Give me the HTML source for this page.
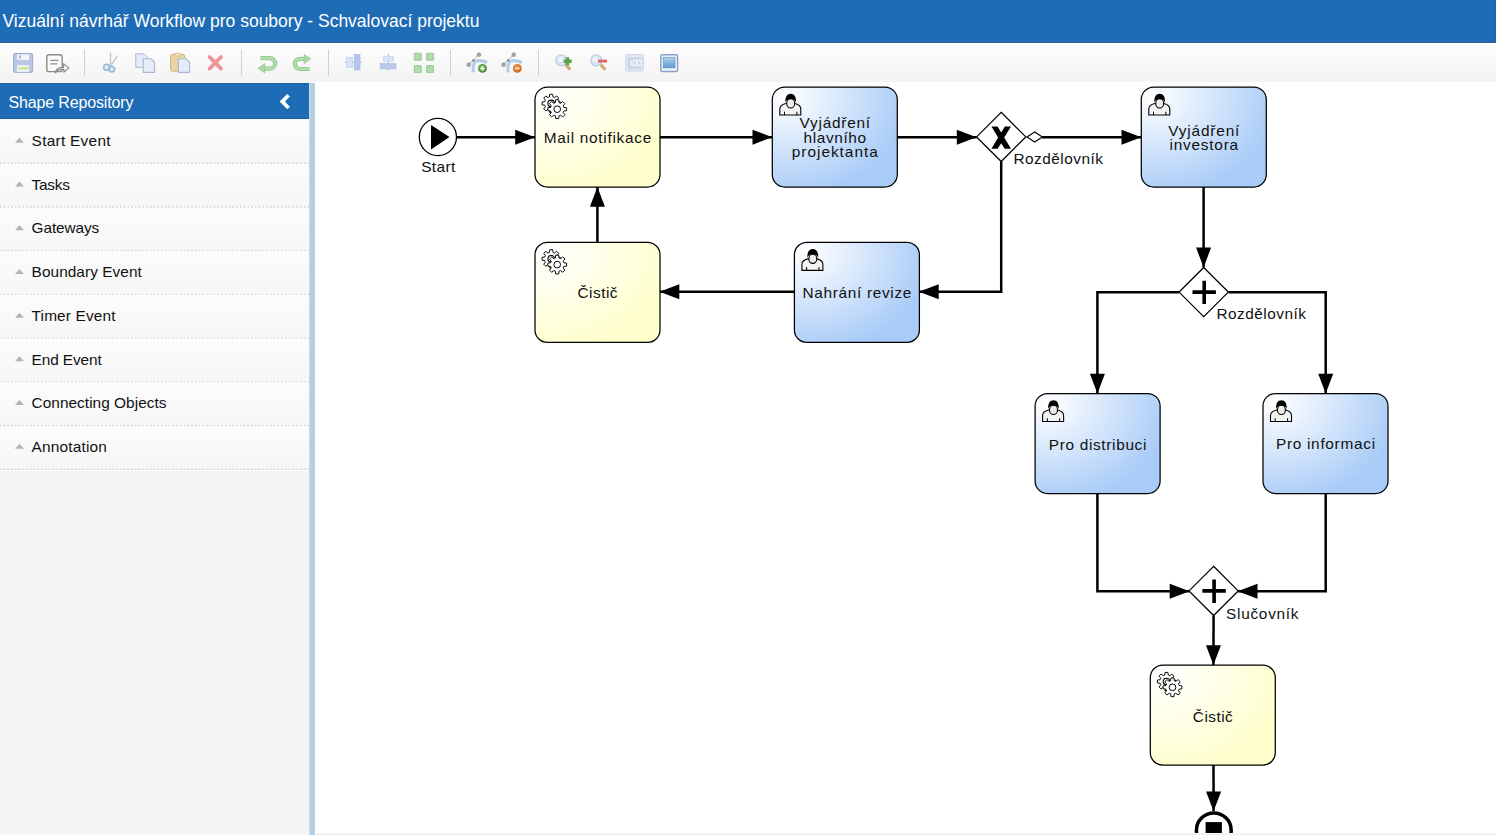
<!DOCTYPE html><html><head><meta charset="utf-8"><title>Workflow</title><style>
html,body{margin:0;padding:0;width:1498px;height:835px;overflow:hidden;background:#fff;font-family:"Liberation Sans", sans-serif}
.a{position:absolute}
svg text{font-family:"Liberation Sans",sans-serif}
</style></head><body>
<div class="a" style="left:0;top:0;width:1496px;height:42px;background:#1e6bb6"></div>
<div class="a" style="left:0;top:42px;width:1496px;height:1px;background:#35618e"></div>
<div class="a" style="left:1495px;top:0;width:1px;height:42px;background:#2a609a"></div>
<div class="a" style="left:0;top:43px;width:1496px;height:39px;background:linear-gradient(#ffffff 0px,#fdfdfd 3px,#f3f3f3 39px)"></div>
<div class="a" style="left:0;top:82px;width:309px;height:753px;background:#f5f5f5"></div>
<div class="a" style="left:0;top:83px;width:309px;height:36px;background:#1e6bb6"></div>
<div class="a" style="left:0;top:83px;width:309px;height:1px;background:#245f9c"></div>
<div class="a" style="left:0;top:118px;width:309px;height:1px;background:#2262a4"></div>
<div class="a" style="left:0;top:119.60px;width:309px;height:43.71px;background:linear-gradient(#fcfcfc,#f6f6f6)"></div>
<div class="a" style="left:0;top:163.31px;width:309px;height:43.71px;background:linear-gradient(#fcfcfc,#f6f6f6)"></div>
<div class="a" style="left:0;top:207.02px;width:309px;height:43.71px;background:linear-gradient(#fcfcfc,#f6f6f6)"></div>
<div class="a" style="left:0;top:250.73px;width:309px;height:43.71px;background:linear-gradient(#fcfcfc,#f6f6f6)"></div>
<div class="a" style="left:0;top:294.44px;width:309px;height:43.71px;background:linear-gradient(#fcfcfc,#f6f6f6)"></div>
<div class="a" style="left:0;top:338.15px;width:309px;height:43.71px;background:linear-gradient(#fcfcfc,#f6f6f6)"></div>
<div class="a" style="left:0;top:381.86px;width:309px;height:43.71px;background:linear-gradient(#fcfcfc,#f6f6f6)"></div>
<div class="a" style="left:0;top:425.57px;width:309px;height:43.71px;background:linear-gradient(#fcfcfc,#f6f6f6)"></div>
<div class="a" style="left:309px;top:83px;width:6px;height:752px;background:#b6cee0"></div>
<div class="a" style="left:309px;top:83px;width:1px;height:752px;background:#c6dcee"></div>
<div class="a" style="left:315px;top:82px;width:1181px;height:751px;background:#fff"></div>
<svg class="a" style="left:0;top:0" width="1498" height="835" viewBox="0 0 1498 835">
<defs>
<radialGradient id="gy" cx="10%" cy="10%" r="100%" fx="10%" fy="10%"><stop offset="0" stop-color="#ffffff"/><stop offset="1" stop-color="#ffffcc"/></radialGradient>
<radialGradient id="gb" cx="10%" cy="10%" r="100%" fx="10%" fy="10%"><stop offset="0" stop-color="#ffffff"/><stop offset="1" stop-color="#a8cbf7"/></radialGradient>
</defs>
<rect x="84.0" y="50" width="1" height="25.6" fill="#cfcfcf"/>
<rect x="241.0" y="50" width="1" height="25.6" fill="#cfcfcf"/>
<rect x="328.0" y="50" width="1" height="25.6" fill="#cfcfcf"/>
<rect x="450.0" y="50" width="1" height="25.6" fill="#cfcfcf"/>
<rect x="538.0" y="50" width="1" height="25.6" fill="#cfcfcf"/>
<rect x="13.6" y="53.5" width="19" height="18.8" rx="1.2" fill="#b9c7e4" stroke="#9aaacd" stroke-width="1"/>
<rect x="17" y="54.3" width="12" height="5.6" fill="#f4f6fb"/>
<rect x="19" y="55.4" width="1.8" height="3.2" fill="#a8a8b8"/>
<rect x="17" y="65.2" width="12" height="6.6" fill="#f2f8f2"/>
<rect x="18.2" y="67" width="10" height="2.7" fill="#d2e4a4"/>
<rect x="46.8" y="54.7" width="15.4" height="16.9" rx="2.2" fill="#fbfbfb" stroke="#8c8c8c" stroke-width="1.4"/>
<path d="M50.4,60.3 H58.5 M50.4,63.9 H57.4" stroke="#8e8e8e" stroke-width="1.3"/>
<path d="M55.2,72.8 C56,68.5 58.5,67.3 63.6,67.3 L63.6,63.8 L68.9,67.9 L63.8,72.2 L63.8,69.2 C60,69.2 57.5,70 55.2,72.8 Z" fill="#fbfbfb" stroke="#8c8c8c" stroke-width="1.2" stroke-linejoin="round"/>
<path d="M110.5,53.2 L110.6,66 M117,56.3 L111.2,65" stroke="#c4c8ce" stroke-width="1.4" stroke-linecap="round"/>
<circle cx="106.6" cy="67.3" r="3.0" fill="#dcebf8" stroke="#97b7d6" stroke-width="1.5"/>
<circle cx="111.8" cy="69.3" r="2.8" fill="#dcebf8" stroke="#97b7d6" stroke-width="1.5"/>
<path d="M135.8,53.8 H144 L147.3,57 V67.2 H135.8 Z" fill="#e6edfa" stroke="#aab6cf" stroke-width="1"/>
<path d="M143.2,58.8 H151 L154.6,62.3 V72.4 H143.2 Z" fill="#e6edfa" stroke="#aab6cf" stroke-width="1.1"/>
<rect x="170.6" y="54.3" width="14" height="16.8" rx="1.8" fill="#ecd4a2" stroke="#cdb486" stroke-width="1"/>
<rect x="175" y="53.2" width="5.6" height="3" rx="0.8" fill="#f6e4bc" stroke="#cdb486" stroke-width="0.8"/>
<path d="M178.4,58.8 H186.1 L189.6,62.3 V72.4 H178.4 Z" fill="#e6edfa" stroke="#aab6cf" stroke-width="1.1"/>
<path d="M209.6,57 L221,68.7 M221,57 L209.6,68.7" stroke="#f0939a" stroke-width="3.8" stroke-linecap="round"/>
<path d="M260.5,58.2 H269 C273,58.2 275.2,60.6 275.2,63.4 C275.2,66.4 273,68.6 269,68.6 H264" fill="none" stroke="#94c894" stroke-width="4.2"/>
<path d="M260.5,58.2 H269 C273,58.2 275.2,60.6 275.2,63.4 C275.2,66.4 273,68.6 269,68.6 H264" fill="none" stroke="#b4e0b0" stroke-width="2.2"/>
<path d="M258.2,68.3 L264.8,63.6 L264.8,73 Z" fill="#a8d8a4" stroke="#94c894" stroke-width="0.8"/>
<path d="M309.5,69 H301 C297,69 294.8,66.6 294.8,63.8 C294.8,60.8 297,58.8 301,58.8 H305" fill="none" stroke="#94c894" stroke-width="4.2"/>
<path d="M309.5,69 H301 C297,69 294.8,66.6 294.8,63.8 C294.8,60.8 297,58.8 301,58.8 H305" fill="none" stroke="#b4e0b0" stroke-width="2.2"/>
<path d="M310.8,58.9 L304.2,54.6 L304.2,63.5 Z" fill="#a8d8a4" stroke="#94c894" stroke-width="0.8"/>
<path d="M345,62.3 H361.7" stroke="#9aa4b4" stroke-width="0.9"/>
<rect x="346.6" y="57.2" width="6" height="10.4" fill="#d6e2f5" stroke="#c2d0e8" stroke-width="0.6"/>
<rect x="354.2" y="54.5" width="5.8" height="15.4" fill="#b4c7ea" stroke="#a4b8dc" stroke-width="0.6"/>
<path d="M388.4,54.3 V70.7" stroke="#9aa4b4" stroke-width="0.9"/>
<rect x="383.2" y="56.2" width="10.4" height="4.9" fill="#d6e2f5" stroke="#c2d0e8" stroke-width="0.6"/>
<rect x="380.2" y="63.5" width="15.8" height="5.5" fill="#b8caea" stroke="#a8bcdc" stroke-width="0.6"/>
<rect x="414.3" y="53.2" width="7" height="7" rx="0.6" fill="#b0dcac" stroke="#90c08c" stroke-width="0.8"/>
<rect x="414.3" y="65.5" width="7" height="7" rx="0.6" fill="#b0dcac" stroke="#90c08c" stroke-width="0.8"/>
<rect x="426.6" y="53.2" width="7" height="7" rx="0.6" fill="#b0dcac" stroke="#90c08c" stroke-width="0.8"/>
<rect x="426.6" y="65.5" width="7" height="7" rx="0.6" fill="#b0dcac" stroke="#90c08c" stroke-width="0.8"/>
<defs><radialGradient id="dg" cx="45%" cy="40%" r="60%"><stop offset="0" stop-color="#8cc46c"/><stop offset="1" stop-color="#3f7f2c"/></radialGradient><radialGradient id="do" cx="45%" cy="40%" r="60%"><stop offset="0" stop-color="#f4a050"/><stop offset="1" stop-color="#c8601c"/></radialGradient></defs>
<path d="M473.2,72.4 C472.8,66 473.4,61.2 477,60.8 C481,60.4 485,61.2 486.8,62.8" fill="none" stroke="#b4cdea" stroke-width="3.2"/>
<path d="M468.8,64.7 L478.9,54.7" stroke="#a0a0a0" stroke-width="0.9"/>
<circle cx="468.8" cy="64.7" r="1.9" fill="#a4a4a4" stroke="#8a8a8a" stroke-width="0.6"/>
<circle cx="478.9" cy="54.7" r="1.9" fill="#a4a4a4" stroke="#8a8a8a" stroke-width="0.6"/>
<circle cx="473.4" cy="60.4" r="1.1" fill="#707070"/>
<circle cx="482.5" cy="68.4" r="4.4" fill="url(#dg)"/>
<path d="M480.2,68.4 H484.8 M482.5,66.1 V70.7" stroke="#eefae8" stroke-width="1.5"/>
<path d="M508.0,72.4 C507.6,66 508.2,61.2 511.8,60.8 C515.8,60.4 519.8,61.2 521.6,62.8" fill="none" stroke="#b4cdea" stroke-width="3.2"/>
<path d="M503.6,64.7 L513.6999999999999,54.7" stroke="#a0a0a0" stroke-width="0.9"/>
<circle cx="503.6" cy="64.7" r="1.9" fill="#a4a4a4" stroke="#8a8a8a" stroke-width="0.6"/>
<circle cx="513.6999999999999" cy="54.7" r="1.9" fill="#a4a4a4" stroke="#8a8a8a" stroke-width="0.6"/>
<circle cx="508.2" cy="60.4" r="1.1" fill="#707070"/>
<circle cx="517.3" cy="68.4" r="4.4" fill="url(#do)"/>
<path d="M515.0,68.4 H519.6" stroke="#fde8d4" stroke-width="1.5"/>
<path d="M566.4,65.4 L569.4,68.6" stroke="#d4ac70" stroke-width="3.4" stroke-linecap="round"/>
<circle cx="561.3" cy="60.4" r="5.5" fill="#dae6f6" stroke="#bccfe6" stroke-width="1.2"/>
<circle cx="560.5" cy="59.6" r="2.5" fill="#eef4fc"/>
<path d="M563.6,61.2 H571.6 M567.5,57.2 V65.2" stroke="#5ea04e" stroke-width="3.4"/>
<path d="M601.4,65.4 L604.4,68.6" stroke="#d4ac70" stroke-width="3.4" stroke-linecap="round"/>
<circle cx="596.3" cy="60.4" r="5.5" fill="#dae6f6" stroke="#bccfe6" stroke-width="1.2"/>
<circle cx="595.5" cy="59.6" r="2.5" fill="#eef4fc"/>
<rect x="598" y="59.6" width="9" height="3" fill="#e46868"/>
<rect x="625.8" y="54.6" width="17.6" height="16.4" rx="1.2" fill="#e2e8f2" stroke="#cdd6e4" stroke-width="1"/>
<rect x="627.9" y="57.6" width="13.3" height="11.2" fill="#c4d2e8"/>
<path d="M630.8,59.6 V65.8" stroke="#f6f9fc" stroke-width="1.3"/>
<rect x="633.2" y="60.2" width="2.9" height="5.2" rx="0.6" fill="none" stroke="#f6f9fc" stroke-width="1.2"/>
<rect x="637.4" y="60.2" width="2.9" height="5.2" rx="0.6" fill="none" stroke="#f6f9fc" stroke-width="1.2"/>
<path d="M628.4,66.8 H640.6" stroke="#f4f8fc" stroke-width="0.6" stroke-dasharray="1.2 0.8"/>
<defs><linearGradient id="zf" x1="0" y1="0" x2="0" y2="1"><stop offset="0" stop-color="#b0d6f2"/><stop offset="1" stop-color="#5c9ad2"/></linearGradient></defs>
<rect x="660.8" y="54.8" width="16.8" height="16.6" rx="1.5" fill="#eef2f8" stroke="#8aa2cc" stroke-width="1.5"/>
<rect x="663.2" y="57.3" width="11.8" height="10.6" fill="url(#zf)" stroke="#6a8ab8" stroke-width="0.6"/>
<text x="2.5" y="27" font-size="17.5" fill="#fff" text-anchor="start" >Vizuální návrhář Workflow pro soubory - Schvalovací projektu</text>
<text x="8.5" y="108" font-size="16" fill="#fff" text-anchor="start" textLength="125" lengthAdjust="spacing" >Shape Repository</text>
<path d="M288.6,95.2 L282.2,101.6 L288.6,108" fill="none" stroke="#fff" stroke-width="3.7" stroke-linejoin="miter"/>
<path d="M0,164.50 H309" stroke="#ffffff" stroke-width="1"/>
<path d="M0,163.40 H309" stroke="#c9c9c9" stroke-width="1.1" stroke-dasharray="1.4 2.35"/>
<path d="M0,208.21 H309" stroke="#ffffff" stroke-width="1"/>
<path d="M0,207.11 H309" stroke="#c9c9c9" stroke-width="1.1" stroke-dasharray="1.4 2.35"/>
<path d="M0,251.92 H309" stroke="#ffffff" stroke-width="1"/>
<path d="M0,250.82 H309" stroke="#c9c9c9" stroke-width="1.1" stroke-dasharray="1.4 2.35"/>
<path d="M0,295.63 H309" stroke="#ffffff" stroke-width="1"/>
<path d="M0,294.53 H309" stroke="#c9c9c9" stroke-width="1.1" stroke-dasharray="1.4 2.35"/>
<path d="M0,339.34 H309" stroke="#ffffff" stroke-width="1"/>
<path d="M0,338.24 H309" stroke="#c9c9c9" stroke-width="1.1" stroke-dasharray="1.4 2.35"/>
<path d="M0,383.05 H309" stroke="#ffffff" stroke-width="1"/>
<path d="M0,381.95 H309" stroke="#c9c9c9" stroke-width="1.1" stroke-dasharray="1.4 2.35"/>
<path d="M0,426.76 H309" stroke="#ffffff" stroke-width="1"/>
<path d="M0,425.66 H309" stroke="#c9c9c9" stroke-width="1.1" stroke-dasharray="1.4 2.35"/>
<path d="M0,470.47 H309" stroke="#ffffff" stroke-width="1"/>
<path d="M0,469.37 H309" stroke="#c9c9c9" stroke-width="1.1" stroke-dasharray="1.4 2.35"/>
<path d="M15,142.80 L24,142.80 L19.5,137.80 Z" fill="#b4b4b4"/>
<g transform="translate(31.6,146.0) scale(1.1,1)"><text x="0" y="0" font-size="14" fill="#111" text-anchor="start" textLength="71.73" lengthAdjust="spacing" >Start Event</text></g>
<path d="M15,186.51 L24,186.51 L19.5,181.51 Z" fill="#b4b4b4"/>
<g transform="translate(31.6,189.71) scale(1.1,1)"><text x="0" y="0" font-size="14" fill="#111" text-anchor="start" textLength="34.82" lengthAdjust="spacing" >Tasks</text></g>
<path d="M15,230.22 L24,230.22 L19.5,225.22 Z" fill="#b4b4b4"/>
<g transform="translate(31.6,233.42) scale(1.1,1)"><text x="0" y="0" font-size="14" fill="#111" text-anchor="start" textLength="61.55" lengthAdjust="spacing" >Gateways</text></g>
<path d="M15,273.93 L24,273.93 L19.5,268.93 Z" fill="#b4b4b4"/>
<g transform="translate(31.6,277.13) scale(1.1,1)"><text x="0" y="0" font-size="14" fill="#111" text-anchor="start" textLength="100.18" lengthAdjust="spacing" >Boundary Event</text></g>
<path d="M15,317.64 L24,317.64 L19.5,312.64 Z" fill="#b4b4b4"/>
<g transform="translate(31.6,320.84) scale(1.1,1)"><text x="0" y="0" font-size="14" fill="#111" text-anchor="start" textLength="76.27" lengthAdjust="spacing" >Timer Event</text></g>
<path d="M15,361.35 L24,361.35 L19.5,356.35 Z" fill="#b4b4b4"/>
<g transform="translate(31.6,364.55) scale(1.1,1)"><text x="0" y="0" font-size="14" fill="#111" text-anchor="start" textLength="63.82" lengthAdjust="spacing" >End Event</text></g>
<path d="M15,405.06 L24,405.06 L19.5,400.06 Z" fill="#b4b4b4"/>
<g transform="translate(31.6,408.26) scale(1.1,1)"><text x="0" y="0" font-size="14" fill="#111" text-anchor="start" textLength="122.64" lengthAdjust="spacing" >Connecting Objects</text></g>
<path d="M15,448.77 L24,448.77 L19.5,443.77 Z" fill="#b4b4b4"/>
<g transform="translate(31.6,451.97) scale(1.1,1)"><text x="0" y="0" font-size="14" fill="#111" text-anchor="start" textLength="68.45" lengthAdjust="spacing" >Annotation</text></g>
<path d="M457,137.2 L535,137.2" fill="none" stroke="#000" stroke-width="2.5"/><path d="M535,137.2 L515.20,144.70 L515.20,129.70 Z" fill="#000"/>
<path d="M660,137.2 L772.3,137.2" fill="none" stroke="#000" stroke-width="2.5"/><path d="M772.3,137.2 L752.50,144.70 L752.50,129.70 Z" fill="#000"/>
<path d="M897,137.2 L976.6,137.2" fill="none" stroke="#000" stroke-width="2.5"/><path d="M976.6,137.2 L956.80,144.70 L956.80,129.70 Z" fill="#000"/>
<path d="M1042,137.2 L1141.3,137.2" fill="none" stroke="#000" stroke-width="2.5"/><path d="M1141.3,137.2 L1121.50,144.70 L1121.50,129.70 Z" fill="#000"/>
<path d="M1027,137 L1034.7,132 L1042.4,137 L1034.7,142 Z" fill="#fff" stroke="#000" stroke-width="1.1"/>
<path d="M1001.2,161.6 L1001.2,291.8 L918.9,291.8" fill="none" stroke="#000" stroke-width="2.5"/><path d="M918.9,291.8 L938.70,284.30 L938.70,299.30 Z" fill="#000"/>
<path d="M794.4,291.8 L659.5,291.8" fill="none" stroke="#000" stroke-width="2.5"/><path d="M659.5,291.8 L679.30,284.30 L679.30,299.30 Z" fill="#000"/>
<path d="M597.4,242.4 L597.4,187" fill="none" stroke="#000" stroke-width="2.5"/><path d="M597.4,187 L604.90,206.80 L589.90,206.80 Z" fill="#000"/>
<path d="M1203.6,187 L1203.6,267.4" fill="none" stroke="#000" stroke-width="2.5"/><path d="M1203.6,267.4 L1196.10,247.60 L1211.10,247.60 Z" fill="#000"/>
<path d="M1179,292.3 L1097.4,292.3 L1097.4,393.5" fill="none" stroke="#000" stroke-width="2.5"/><path d="M1097.4,393.5 L1089.90,373.70 L1104.90,373.70 Z" fill="#000"/>
<path d="M1228.4,292.3 L1325.7,292.3 L1325.7,393.5" fill="none" stroke="#000" stroke-width="2.5"/><path d="M1325.7,393.5 L1318.20,373.70 L1333.20,373.70 Z" fill="#000"/>
<path d="M1097.4,493.5 L1097.4,591.2 L1189.5,591.2" fill="none" stroke="#000" stroke-width="2.5"/><path d="M1189.5,591.2 L1169.70,598.70 L1169.70,583.70 Z" fill="#000"/>
<path d="M1325.7,493.5 L1325.7,591.2 L1237.7,591.2" fill="none" stroke="#000" stroke-width="2.5"/><path d="M1237.7,591.2 L1257.50,583.70 L1257.50,598.70 Z" fill="#000"/>
<path d="M1213.6,615.6 L1213.4,665.1" fill="none" stroke="#000" stroke-width="2.5"/><path d="M1213.4,665.1 L1205.98,645.27 L1220.98,645.33 Z" fill="#000"/>
<path d="M1213.5,765 L1213.6,811.2" fill="none" stroke="#000" stroke-width="2.5"/><path d="M1213.6,811.2 L1206.06,791.42 L1221.06,791.38 Z" fill="#000"/>
<circle cx="437.9" cy="137" r="18.6" fill="#fff" stroke="#000" stroke-width="1.3"/>
<path d="M431,125 L449.5,137 L431,149.4 Z" fill="#000"/>
<g transform="translate(438.2,171.6) scale(1.1,1)"><text x="0" y="0" font-size="14" fill="#111" text-anchor="middle" textLength="30.91" lengthAdjust="spacing" >Start</text></g>
<circle cx="1213.8" cy="830.4" r="17.4" fill="#fff" stroke="#000" stroke-width="3.5"/>
<rect x="1205.6" y="822.1" width="16.3" height="16.3" fill="#000"/>
<rect x="535" y="87" width="125" height="100" rx="12.5" ry="12.5" fill="url(#gy)" stroke="#000" stroke-width="1.25"/>
<path d="M557.55,101.60 L560.29,101.95 L560.29,104.85 L557.55,105.20 A6.6,6.6 0 0 1 556.96,106.62 L558.65,108.80 L556.60,110.85 L554.42,109.16 A6.6,6.6 0 0 1 553.00,109.75 L552.65,112.49 L549.75,112.49 L549.40,109.75 A6.6,6.6 0 0 1 547.98,109.16 L545.80,110.85 L543.75,108.80 L545.44,106.62 A6.6,6.6 0 0 1 544.85,105.20 L542.11,104.85 L542.11,101.95 L544.85,101.60 A6.6,6.6 0 0 1 545.44,100.18 L543.75,98.00 L545.80,95.95 L547.98,97.64 A6.6,6.6 0 0 1 549.40,97.05 L549.75,94.31 L552.65,94.31 L553.00,97.05 A6.6,6.6 0 0 1 554.42,97.64 L556.60,95.95 L558.65,98.00 L556.96,100.18 A6.6,6.6 0 0 1 557.55,101.60 Z" fill="#fff" stroke="#000" stroke-width="0.95" stroke-linejoin="round"/><circle cx="551.2" cy="103.4" r="3.3" fill="none" stroke="#000" stroke-width="1.1"/><path d="M563.74,107.35 L566.58,107.70 L566.58,110.70 L563.74,111.05 A6.8,6.8 0 0 1 563.14,112.52 L564.89,114.77 L562.77,116.89 L560.52,115.14 A6.8,6.8 0 0 1 559.05,115.74 L558.70,118.58 L555.70,118.58 L555.35,115.74 A6.8,6.8 0 0 1 553.88,115.14 L551.63,116.89 L549.51,114.77 L551.26,112.52 A6.8,6.8 0 0 1 550.66,111.05 L547.82,110.70 L547.82,107.70 L550.66,107.35 A6.8,6.8 0 0 1 551.26,105.88 L549.51,103.63 L551.63,101.51 L553.88,103.26 A6.8,6.8 0 0 1 555.35,102.66 L555.70,99.82 L558.70,99.82 L559.05,102.66 A6.8,6.8 0 0 1 560.52,103.26 L562.77,101.51 L564.89,103.63 L563.14,105.88 A6.8,6.8 0 0 1 563.74,107.35 Z" fill="#fff" stroke="#000" stroke-width="0.95" stroke-linejoin="round"/><circle cx="557.2" cy="109.2" r="3.35" fill="none" stroke="#000" stroke-width="1"/>
<g transform="translate(597.5,142.8) scale(1.1,1)"><text x="0" y="0" font-size="14" fill="#111" text-anchor="middle" textLength="97.73" lengthAdjust="spacing" >Mail notifikace</text></g>
<rect x="772.3" y="87" width="125" height="100" rx="12.5" ry="12.5" fill="url(#gb)" stroke="#000" stroke-width="1.25"/>
<g transform="translate(779.3,93.5)"><path d="M0.5,21.5 L0.5,15.5 C0.5,12.8 3.5,10.8 6.5,10 L15.5,10 C18.5,10.8 21.5,12.8 21.5,15.5 L21.5,21.5 Z" fill="#f3f3f1" stroke="#000" stroke-width="1.1"/><path d="M5.2,18.2 V21.5 M17.6,18.2 V21.5" stroke="#000" stroke-width="1"/><ellipse cx="11.4" cy="9.9" rx="4.0" ry="4.6" fill="#ececea" stroke="#000" stroke-width="1.1"/><path d="M6.1,9 C5.5,3.6 8,0.2 11.4,0.2 C14.8,0.2 17.3,3.6 16.7,9 C16.1,6.6 14.2,5.4 11.4,5.4 C8.6,5.4 6.7,6.6 6.1,9 Z" fill="#000"/></g>
<g transform="translate(834.8,127.5) scale(1.1,1)"><text x="0" y="0" font-size="14" fill="#111" text-anchor="middle" textLength="64.09" lengthAdjust="spacing" >Vyjádření</text></g>
<g transform="translate(834.8,142.5) scale(1.1,1)"><text x="0" y="0" font-size="14" fill="#111" text-anchor="middle" textLength="56.82" lengthAdjust="spacing" >hlavního</text></g>
<g transform="translate(834.8,157.2) scale(1.1,1)"><text x="0" y="0" font-size="14" fill="#111" text-anchor="middle" textLength="78.18" lengthAdjust="spacing" >projektanta</text></g>
<rect x="1141.3" y="87" width="125" height="100" rx="12.5" ry="12.5" fill="url(#gb)" stroke="#000" stroke-width="1.25"/>
<g transform="translate(1148.3,93.5)"><path d="M0.5,21.5 L0.5,15.5 C0.5,12.8 3.5,10.8 6.5,10 L15.5,10 C18.5,10.8 21.5,12.8 21.5,15.5 L21.5,21.5 Z" fill="#f3f3f1" stroke="#000" stroke-width="1.1"/><path d="M5.2,18.2 V21.5 M17.6,18.2 V21.5" stroke="#000" stroke-width="1"/><ellipse cx="11.4" cy="9.9" rx="4.0" ry="4.6" fill="#ececea" stroke="#000" stroke-width="1.1"/><path d="M6.1,9 C5.5,3.6 8,0.2 11.4,0.2 C14.8,0.2 17.3,3.6 16.7,9 C16.1,6.6 14.2,5.4 11.4,5.4 C8.6,5.4 6.7,6.6 6.1,9 Z" fill="#000"/></g>
<g transform="translate(1203.8,135.7) scale(1.1,1)"><text x="0" y="0" font-size="14" fill="#111" text-anchor="middle" textLength="64.55" lengthAdjust="spacing" >Vyjádření</text></g>
<g transform="translate(1203.8,150.4) scale(1.1,1)"><text x="0" y="0" font-size="14" fill="#111" text-anchor="middle" textLength="62.45" lengthAdjust="spacing" >investora</text></g>
<rect x="535" y="242.4" width="125" height="100" rx="12.5" ry="12.5" fill="url(#gy)" stroke="#000" stroke-width="1.25"/>
<path d="M557.55,257.00 L560.29,257.35 L560.29,260.25 L557.55,260.60 A6.6,6.6 0 0 1 556.96,262.02 L558.65,264.20 L556.60,266.25 L554.42,264.56 A6.6,6.6 0 0 1 553.00,265.15 L552.65,267.89 L549.75,267.89 L549.40,265.15 A6.6,6.6 0 0 1 547.98,264.56 L545.80,266.25 L543.75,264.20 L545.44,262.02 A6.6,6.6 0 0 1 544.85,260.60 L542.11,260.25 L542.11,257.35 L544.85,257.00 A6.6,6.6 0 0 1 545.44,255.58 L543.75,253.40 L545.80,251.35 L547.98,253.04 A6.6,6.6 0 0 1 549.40,252.45 L549.75,249.71 L552.65,249.71 L553.00,252.45 A6.6,6.6 0 0 1 554.42,253.04 L556.60,251.35 L558.65,253.40 L556.96,255.58 A6.6,6.6 0 0 1 557.55,257.00 Z" fill="#fff" stroke="#000" stroke-width="0.95" stroke-linejoin="round"/><circle cx="551.2" cy="258.8" r="3.3" fill="none" stroke="#000" stroke-width="1.1"/><path d="M563.74,262.75 L566.58,263.10 L566.58,266.10 L563.74,266.45 A6.8,6.8 0 0 1 563.14,267.92 L564.89,270.17 L562.77,272.29 L560.52,270.54 A6.8,6.8 0 0 1 559.05,271.14 L558.70,273.98 L555.70,273.98 L555.35,271.14 A6.8,6.8 0 0 1 553.88,270.54 L551.63,272.29 L549.51,270.17 L551.26,267.92 A6.8,6.8 0 0 1 550.66,266.45 L547.82,266.10 L547.82,263.10 L550.66,262.75 A6.8,6.8 0 0 1 551.26,261.28 L549.51,259.03 L551.63,256.91 L553.88,258.66 A6.8,6.8 0 0 1 555.35,258.06 L555.70,255.22 L558.70,255.22 L559.05,258.06 A6.8,6.8 0 0 1 560.52,258.66 L562.77,256.91 L564.89,259.03 L563.14,261.28 A6.8,6.8 0 0 1 563.74,262.75 Z" fill="#fff" stroke="#000" stroke-width="0.95" stroke-linejoin="round"/><circle cx="557.2" cy="264.6" r="3.35" fill="none" stroke="#000" stroke-width="1"/>
<g transform="translate(597.5,297.9) scale(1.1,1)"><text x="0" y="0" font-size="14" fill="#111" text-anchor="middle" textLength="36.36" lengthAdjust="spacing" >Čistič</text></g>
<rect x="794.4" y="242.4" width="125" height="100" rx="12.5" ry="12.5" fill="url(#gb)" stroke="#000" stroke-width="1.25"/>
<g transform="translate(801.4,248.9)"><path d="M0.5,21.5 L0.5,15.5 C0.5,12.8 3.5,10.8 6.5,10 L15.5,10 C18.5,10.8 21.5,12.8 21.5,15.5 L21.5,21.5 Z" fill="#f3f3f1" stroke="#000" stroke-width="1.1"/><path d="M5.2,18.2 V21.5 M17.6,18.2 V21.5" stroke="#000" stroke-width="1"/><ellipse cx="11.4" cy="9.9" rx="4.0" ry="4.6" fill="#ececea" stroke="#000" stroke-width="1.1"/><path d="M6.1,9 C5.5,3.6 8,0.2 11.4,0.2 C14.8,0.2 17.3,3.6 16.7,9 C16.1,6.6 14.2,5.4 11.4,5.4 C8.6,5.4 6.7,6.6 6.1,9 Z" fill="#000"/></g>
<g transform="translate(856.9,297.5) scale(1.1,1)"><text x="0" y="0" font-size="14" fill="#111" text-anchor="middle" textLength="99.09" lengthAdjust="spacing" >Nahrání revize</text></g>
<rect x="1035.1" y="393.5" width="125" height="100" rx="12.5" ry="12.5" fill="url(#gb)" stroke="#000" stroke-width="1.25"/>
<g transform="translate(1042.1,400.0)"><path d="M0.5,21.5 L0.5,15.5 C0.5,12.8 3.5,10.8 6.5,10 L15.5,10 C18.5,10.8 21.5,12.8 21.5,15.5 L21.5,21.5 Z" fill="#f3f3f1" stroke="#000" stroke-width="1.1"/><path d="M5.2,18.2 V21.5 M17.6,18.2 V21.5" stroke="#000" stroke-width="1"/><ellipse cx="11.4" cy="9.9" rx="4.0" ry="4.6" fill="#ececea" stroke="#000" stroke-width="1.1"/><path d="M6.1,9 C5.5,3.6 8,0.2 11.4,0.2 C14.8,0.2 17.3,3.6 16.7,9 C16.1,6.6 14.2,5.4 11.4,5.4 C8.6,5.4 6.7,6.6 6.1,9 Z" fill="#000"/></g>
<g transform="translate(1097.6,449.7) scale(1.1,1)"><text x="0" y="0" font-size="14" fill="#111" text-anchor="middle" textLength="88.73" lengthAdjust="spacing" >Pro distribuci</text></g>
<rect x="1263" y="393.5" width="125" height="100" rx="12.5" ry="12.5" fill="url(#gb)" stroke="#000" stroke-width="1.25"/>
<g transform="translate(1270,400.0)"><path d="M0.5,21.5 L0.5,15.5 C0.5,12.8 3.5,10.8 6.5,10 L15.5,10 C18.5,10.8 21.5,12.8 21.5,15.5 L21.5,21.5 Z" fill="#f3f3f1" stroke="#000" stroke-width="1.1"/><path d="M5.2,18.2 V21.5 M17.6,18.2 V21.5" stroke="#000" stroke-width="1"/><ellipse cx="11.4" cy="9.9" rx="4.0" ry="4.6" fill="#ececea" stroke="#000" stroke-width="1.1"/><path d="M6.1,9 C5.5,3.6 8,0.2 11.4,0.2 C14.8,0.2 17.3,3.6 16.7,9 C16.1,6.6 14.2,5.4 11.4,5.4 C8.6,5.4 6.7,6.6 6.1,9 Z" fill="#000"/></g>
<g transform="translate(1325.5,448.8) scale(1.1,1)"><text x="0" y="0" font-size="14" fill="#111" text-anchor="middle" textLength="90.18" lengthAdjust="spacing" >Pro informaci</text></g>
<rect x="1150.3" y="665.1" width="125" height="100" rx="12.5" ry="12.5" fill="url(#gy)" stroke="#000" stroke-width="1.25"/>
<path d="M1172.85,679.70 L1175.59,680.05 L1175.59,682.95 L1172.85,683.30 A6.6,6.6 0 0 1 1172.26,684.72 L1173.95,686.90 L1171.90,688.95 L1169.72,687.26 A6.6,6.6 0 0 1 1168.30,687.85 L1167.95,690.59 L1165.05,690.59 L1164.70,687.85 A6.6,6.6 0 0 1 1163.28,687.26 L1161.10,688.95 L1159.05,686.90 L1160.74,684.72 A6.6,6.6 0 0 1 1160.15,683.30 L1157.41,682.95 L1157.41,680.05 L1160.15,679.70 A6.6,6.6 0 0 1 1160.74,678.28 L1159.05,676.10 L1161.10,674.05 L1163.28,675.74 A6.6,6.6 0 0 1 1164.70,675.15 L1165.05,672.41 L1167.95,672.41 L1168.30,675.15 A6.6,6.6 0 0 1 1169.72,675.74 L1171.90,674.05 L1173.95,676.10 L1172.26,678.28 A6.6,6.6 0 0 1 1172.85,679.70 Z" fill="#fff" stroke="#000" stroke-width="0.95" stroke-linejoin="round"/><circle cx="1166.5" cy="681.5" r="3.3" fill="none" stroke="#000" stroke-width="1.1"/><path d="M1179.04,685.45 L1181.88,685.80 L1181.88,688.80 L1179.04,689.15 A6.8,6.8 0 0 1 1178.44,690.62 L1180.19,692.87 L1178.07,694.99 L1175.82,693.24 A6.8,6.8 0 0 1 1174.35,693.84 L1174.00,696.68 L1171.00,696.68 L1170.65,693.84 A6.8,6.8 0 0 1 1169.18,693.24 L1166.93,694.99 L1164.81,692.87 L1166.56,690.62 A6.8,6.8 0 0 1 1165.96,689.15 L1163.12,688.80 L1163.12,685.80 L1165.96,685.45 A6.8,6.8 0 0 1 1166.56,683.98 L1164.81,681.73 L1166.93,679.61 L1169.18,681.36 A6.8,6.8 0 0 1 1170.65,680.76 L1171.00,677.92 L1174.00,677.92 L1174.35,680.76 A6.8,6.8 0 0 1 1175.82,681.36 L1178.07,679.61 L1180.19,681.73 L1178.44,683.98 A6.8,6.8 0 0 1 1179.04,685.45 Z" fill="#fff" stroke="#000" stroke-width="0.95" stroke-linejoin="round"/><circle cx="1172.5" cy="687.3000000000001" r="3.35" fill="none" stroke="#000" stroke-width="1"/>
<g transform="translate(1212.8,721.6) scale(1.1,1)"><text x="0" y="0" font-size="14" fill="#111" text-anchor="middle" textLength="36.36" lengthAdjust="spacing" >Čistič</text></g>
<path d="M1001.2,112.30000000000001 L1025.8,136.9 L1001.2,161.5 L976.6,136.9 Z" fill="#fff" stroke="#000" stroke-width="1.25"/><path d="M991.40,126.50 L997.50,126.50 L1001.20,132.40 L1004.90,126.50 L1011.00,126.50 L1004.20,137.60 L1011.00,148.80 L1004.80,148.80 L1001.20,143.20 L997.60,148.80 L991.40,148.80 L998.10,137.60 Z" fill="#000"/>
<path d="M1203.7,267.5 L1228.3,292.1 L1203.7,316.70000000000005 L1179.1000000000001,292.1 Z" fill="#fff" stroke="#000" stroke-width="1.25"/><path d="M1192.5,292.1 H1215.9 M1204.2,280.70000000000005 V304.1" stroke="#000" stroke-width="3.6"/>
<path d="M1213.6,566.3 L1238.1999999999998,590.9 L1213.6,615.5 L1189.0,590.9 Z" fill="#fff" stroke="#000" stroke-width="1.25"/><path d="M1202.3999999999999,590.9 H1225.8 M1214.1,579.5 V602.9" stroke="#000" stroke-width="3.6"/>
<g transform="translate(1013.4,164.4) scale(1.1,1)"><text x="0" y="0" font-size="14" fill="#111" text-anchor="start" textLength="81.36" lengthAdjust="spacing" >Rozdělovník</text></g>
<g transform="translate(1216.4,319.4) scale(1.1,1)"><text x="0" y="0" font-size="14" fill="#111" text-anchor="start" textLength="81.36" lengthAdjust="spacing" >Rozdělovník</text></g>
<g transform="translate(1226.1,618.6) scale(1.1,1)"><text x="0" y="0" font-size="14" fill="#111" text-anchor="start" textLength="65.82" lengthAdjust="spacing" >Slučovník</text></g>
</svg>
<div class="a" style="left:315px;top:833px;width:1181px;height:1px;background:#f7f7f7"></div>
<div class="a" style="left:315px;top:834px;width:1181px;height:1px;background:#ededed"></div>
</body></html>
